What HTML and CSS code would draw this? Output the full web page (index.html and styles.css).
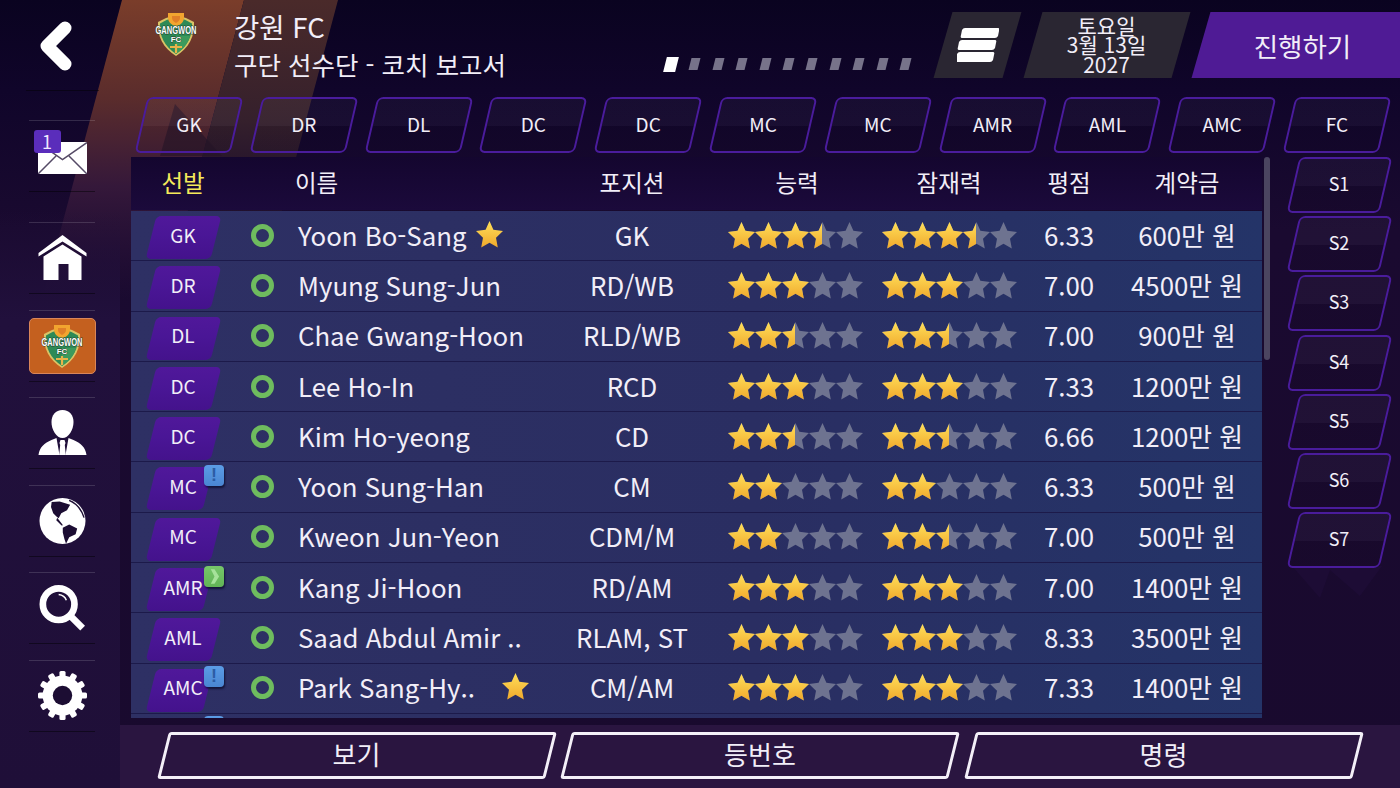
FILE: index.html
```html
<!DOCTYPE html>
<html lang="ko">
<head>
<meta charset="utf-8">
<title>구단 선수단 - 코치 보고서</title>
<link rel="stylesheet" href="styles.css">
</head>
<body>
<svg class="defs" width="0" height="0" aria-hidden="true">
  <defs>
    <linearGradient id="gold" x1="0" y1="0" x2="0" y2="1"><stop offset="0" stop-color="#ffdf5a"/><stop offset="1" stop-color="#f0a92c"/></linearGradient>
    <linearGradient id="bandA" x1="0" y1="0" x2="0" y2="1"><stop offset="0" stop-color="#7a3d2a"/><stop offset=".33" stop-color="#5a2c2c"/><stop offset=".62" stop-color="#35183a"/><stop offset="1" stop-color="#2a1238" stop-opacity="0"/></linearGradient>
    <linearGradient id="bandB" x1="0" y1="0" x2="0" y2="1"><stop offset="0" stop-color="#4a2a2a"/><stop offset=".4" stop-color="#35202c"/><stop offset="1" stop-color="#1c0c2c" stop-opacity="0"/></linearGradient>
    <symbol id="five" viewBox="0 0 135 27">
      <path id="st" d="M13.500 0l3.900 8.700 9.600 1.300-7 6.800 1.800 9.700-8.300-4.700-8.300 4.700 1.800-9.700-7-6.800 9.600-1.300z"/>
      <use href="#st" x="27"/><use href="#st" x="54"/><use href="#st" x="81"/><use href="#st" x="108"/>
    </symbol>
    <symbol id="crest" viewBox="0 0 42 44">
      <path d="M11 6l10-3 10 3 8 4c1 14-5 26-18 34C8 36 2 24 3 10z" fill="#d9c466"/>
      <path d="M11.500 8L21 5l9.500 3 6.500 3.500c.8 12-4.500 23-16 30.500C9.500 34.500 4.200 23.500 5 11.500z" fill="#2d8a56"/>
      <path d="M21 24h14c-2 7-6 13-14 18z" fill="#3c9a5c"/>
      <path d="M13 1h16v4c0 5-3 8-8 9-5-1-8-4-8-9z" fill="#f2a52f"/>
      <path d="M17 4h8v2c0 2-2 4-4 5-2-1-4-3-4-5z" fill="#e07f28"/>
      <text x="21" y="21.500" textLength="41" lengthAdjust="spacingAndGlyphs" class="crest-name">GANGWON</text>
      <text x="21" y="30" class="crest-fc">FC</text>
      <path d="M15 35h12M21 32v9" stroke="#e8b34a" stroke-width="2.200" fill="none"/>
    </symbol>
  </defs>
</svg>

<div class="app">
  <svg class="decor" viewBox="0 0 1400 788" aria-hidden="true">
    <path d="M122 0H244L164 300H42z" fill="url(#bandA)"/>
    <path d="M244 0H338L258 300H164z" fill="url(#bandB)"/>
    <path d="M175 104L222 156H160z" fill="#241428" opacity=".6"/>
    <path d="M1292 566H1382L1360 596 1330 570 1320 598z" fill="#1f0e3a" opacity=".6"/>
  </svg>

  <aside class="sidebar">
    <div class="nav-back">
      <svg class="back-icon" viewBox="0 0 40 52"><path d="M29 8L11 26l18 18" fill="none" stroke="#fff" stroke-width="13" stroke-linecap="round" stroke-linejoin="round"/></svg>
    </div>
    <nav class="nav-list">
      <div class="nav-item nav-first">
        <div class="mail">
          <svg class="mail-icon" viewBox="0 0 49 32"><path d="M0 0h49v32H0z" fill="#fff"/><path d="M0 .5l24.500 17L49 .5M0 32l18-18M49 32L31 14" fill="none" stroke="#554a66" stroke-width="1.500"/></svg>
          <span class="mail-count">1</span>
        </div>
      </div>
      <div class="nav-item">
        <svg class="icon" viewBox="0 0 48 46"><path d="M24 0L48 18v3.500L24 6.500 0 21.500V18z" fill="#fff"/><path d="M24 9.500L43 21.500V45H30V29H20V45H5V21.500z" fill="#fff"/></svg>
      </div>
      <div class="nav-item">
        <div class="club-tile"><svg class="club-crest"><use href="#crest"/></svg></div>
      </div>
      <div class="nav-item">
        <svg class="icon" viewBox="0 0 48 46"><path d="M24 0c7 0 11 5 11 12 0 8-5 16-11 16S13 20 13 12C13 5 17 0 24 0z" fill="#fff"/><path d="M0 45C1 37 6 33 13 30l5-2 3 17zM48 45c-1-8-6-12-13-15l-5-2-3 17z" fill="#fff"/><path d="M22 30h4l1 3-.7 2 1 10h-6.600l1-10-.7-2z" fill="#fff"/></svg>
      </div>
      <div class="nav-item">
        <svg class="icon" viewBox="0 0 48 48"><circle cx="24" cy="24" r="24" fill="#fff"/><path d="M12.700 4.300L21 3.700 32 7l-3.300 5.700-6 3.300-2.700 5-2.300-1.700-3.400-3.300L12 9.300zM18.500 20.500l6 8-1.500.2-5.500-5.500z" fill="#1c0d33"/><path d="M24.300 31l6.700-3.300 8.300 4-1.600 6-6.700 3.300-3.300 6.700-1.700-5-1.700-6.700z" fill="#1c0d33"/><path d="M31 2.500c7 3 13 10 15.500 18" fill="none" stroke="#1c0d33" stroke-width="1.500"/></svg>
      </div>
      <div class="nav-item">
        <svg class="icon" viewBox="0 0 48 48"><circle cx="20" cy="20" r="16.500" fill="none" stroke="#fff" stroke-width="7"/><path d="M32 32l13 13" stroke="#fff" stroke-width="7"/><path d="M20 10c4 .5 7 3 8 6" fill="none" stroke="#fff" stroke-width="1.500"/></svg>
      </div>
      <div class="nav-item">
        <svg class="icon gear" viewBox="0 0 48 48"><g fill="#fff"><circle cx="24" cy="24" r="19.500"/><rect x="21" y="0" width="6" height="48" rx="1.500"/><rect x="21" y="0" width="6" height="48" rx="1.500" transform="rotate(30 24 24)"/><rect x="21" y="0" width="6" height="48" rx="1.500" transform="rotate(60 24 24)"/><rect x="21" y="0" width="6" height="48" rx="1.500" transform="rotate(90 24 24)"/><rect x="21" y="0" width="6" height="48" rx="1.500" transform="rotate(120 24 24)"/><rect x="21" y="0" width="6" height="48" rx="1.500" transform="rotate(150 24 24)"/></g><circle cx="24" cy="24" r="9.500" fill="#1c0d33"/></svg>
      </div>
    </nav>
  </aside>

  <main class="main">
    <header class="topbar">
      <svg class="top-crest"><use href="#crest"/></svg>
      <div class="titles">
        <div class="title-club">강원 FC</div>
        <div class="title-page">구단 선수단 - 코치 보고서</div>
      </div>
      <div class="pager">
        <span class="dot dot-on"></span><span class="dot"></span><span class="dot"></span><span class="dot"></span><span class="dot"></span><span class="dot"></span><span class="dot"></span><span class="dot"></span><span class="dot"></span><span class="dot"></span><span class="dot"></span>
      </div>
      <div class="slant menu-btn">
        <svg class="menu-icon" viewBox="0 0 42 34"><path d="M8 0h33q2 0 1 3l-1 5q-1 2-3 2H5q-2 0-1-3l1-5q1-2 3-2zM5 12h33q2 0 1 3l-1 5q-1 2-3 2H2q-2 0-1-3l1-5q1-2 3-2zM3 24h33q2 0 1 3l-1 5q-1 2-3 2H0q-2 0-1-3l1-5q1-2 3-2z" fill="#fff"/></svg>
      </div>
      <div class="slant date-btn"><span>토요일</span><span>3월 13일</span><span>2027</span></div>
      <div class="slant go-btn">진행하기</div>
    </header>

    <div class="pos-tabs">
      <div class="tab">GK</div><div class="tab">DR</div><div class="tab">DL</div><div class="tab">DC</div><div class="tab">DC</div><div class="tab">MC</div><div class="tab">MC</div><div class="tab">AMR</div><div class="tab">AML</div><div class="tab">AMC</div><div class="tab">FC</div>
    </div>

    <div class="content">
      <section class="table">
        <div class="row head">
          <div class="c-pos starter">선발</div>
          <div></div>
          <div class="c-name head-name">이름</div>
          <div class="c-mid">포지션</div>
          <div class="c-mid">능력</div>
          <div class="c-mid">잠재력</div>
          <div class="c-mid">평점</div>
          <div class="c-mid">계약금</div>
        </div>
        <div class="rows">
          <div class="row">
            <div class="c-pos"><span class="badge">GK</span></div><div class="ring"></div>
            <div class="c-name">Yoon Bo-Sang<svg class="fav" viewBox="0 0 27 27"><use href="#st" fill="url(#gold)"/></svg></div>
            <div class="c-mid">GK</div>
            <div class="stars stars-a"><svg class="five grey"><use href="#five"/></svg><div class="stars-fill" style="width:70%"><svg class="five"><use href="#five" fill="url(#gold)"/></svg></div></div>
            <div class="stars"><svg class="five grey"><use href="#five"/></svg><div class="stars-fill" style="width:70%"><svg class="five"><use href="#five" fill="url(#gold)"/></svg></div></div>
            <div class="c-mid">6.33</div><div class="c-mid">600만 원</div>
          </div>
          <div class="row">
            <div class="c-pos"><span class="badge">DR</span></div><div class="ring"></div>
            <div class="c-name">Myung Sung-Jun</div>
            <div class="c-mid">RD/WB</div>
            <div class="stars stars-a"><svg class="five grey"><use href="#five"/></svg><div class="stars-fill" style="width:60%"><svg class="five"><use href="#five" fill="url(#gold)"/></svg></div></div>
            <div class="stars"><svg class="five grey"><use href="#five"/></svg><div class="stars-fill" style="width:60%"><svg class="five"><use href="#five" fill="url(#gold)"/></svg></div></div>
            <div class="c-mid">7.00</div><div class="c-mid">4500만 원</div>
          </div>
          <div class="row">
            <div class="c-pos"><span class="badge">DL</span></div><div class="ring"></div>
            <div class="c-name">Chae Gwang-Hoon</div>
            <div class="c-mid">RLD/WB</div>
            <div class="stars stars-a"><svg class="five grey"><use href="#five"/></svg><div class="stars-fill" style="width:50%"><svg class="five"><use href="#five" fill="url(#gold)"/></svg></div></div>
            <div class="stars"><svg class="five grey"><use href="#five"/></svg><div class="stars-fill" style="width:50%"><svg class="five"><use href="#five" fill="url(#gold)"/></svg></div></div>
            <div class="c-mid">7.00</div><div class="c-mid">900만 원</div>
          </div>
          <div class="row">
            <div class="c-pos"><span class="badge">DC</span></div><div class="ring"></div>
            <div class="c-name">Lee Ho-In</div>
            <div class="c-mid">RCD</div>
            <div class="stars stars-a"><svg class="five grey"><use href="#five"/></svg><div class="stars-fill" style="width:60%"><svg class="five"><use href="#five" fill="url(#gold)"/></svg></div></div>
            <div class="stars"><svg class="five grey"><use href="#five"/></svg><div class="stars-fill" style="width:60%"><svg class="five"><use href="#five" fill="url(#gold)"/></svg></div></div>
            <div class="c-mid">7.33</div><div class="c-mid">1200만 원</div>
          </div>
          <div class="row">
            <div class="c-pos"><span class="badge">DC</span></div><div class="ring"></div>
            <div class="c-name">Kim Ho-yeong</div>
            <div class="c-mid">CD</div>
            <div class="stars stars-a"><svg class="five grey"><use href="#five"/></svg><div class="stars-fill" style="width:50%"><svg class="five"><use href="#five" fill="url(#gold)"/></svg></div></div>
            <div class="stars"><svg class="five grey"><use href="#five"/></svg><div class="stars-fill" style="width:50%"><svg class="five"><use href="#five" fill="url(#gold)"/></svg></div></div>
            <div class="c-mid">6.66</div><div class="c-mid">1200만 원</div>
          </div>
          <div class="row">
            <div class="c-pos"><span class="badge badge-short">MC</span><span class="flag flag-info">!</span></div><div class="ring"></div>
            <div class="c-name">Yoon Sung-Han</div>
            <div class="c-mid">CM</div>
            <div class="stars stars-a"><svg class="five grey"><use href="#five"/></svg><div class="stars-fill" style="width:40%"><svg class="five"><use href="#five" fill="url(#gold)"/></svg></div></div>
            <div class="stars"><svg class="five grey"><use href="#five"/></svg><div class="stars-fill" style="width:40%"><svg class="five"><use href="#five" fill="url(#gold)"/></svg></div></div>
            <div class="c-mid">6.33</div><div class="c-mid">500만 원</div>
          </div>
          <div class="row">
            <div class="c-pos"><span class="badge">MC</span></div><div class="ring"></div>
            <div class="c-name">Kweon Jun-Yeon</div>
            <div class="c-mid">CDM/M</div>
            <div class="stars stars-a"><svg class="five grey"><use href="#five"/></svg><div class="stars-fill" style="width:40%"><svg class="five"><use href="#five" fill="url(#gold)"/></svg></div></div>
            <div class="stars"><svg class="five grey"><use href="#five"/></svg><div class="stars-fill" style="width:50%"><svg class="five"><use href="#five" fill="url(#gold)"/></svg></div></div>
            <div class="c-mid">7.00</div><div class="c-mid">500만 원</div>
          </div>
          <div class="row">
            <div class="c-pos"><span class="badge badge-short">AMR</span><span class="flag flag-go"><svg class="flag-arrow" viewBox="0 0 12 16"><path d="M2 0h4l5 8-5 8H2l4-8z"/></svg></span></div><div class="ring"></div>
            <div class="c-name">Kang Ji-Hoon</div>
            <div class="c-mid">RD/AM</div>
            <div class="stars stars-a"><svg class="five grey"><use href="#five"/></svg><div class="stars-fill" style="width:60%"><svg class="five"><use href="#five" fill="url(#gold)"/></svg></div></div>
            <div class="stars"><svg class="five grey"><use href="#five"/></svg><div class="stars-fill" style="width:60%"><svg class="five"><use href="#five" fill="url(#gold)"/></svg></div></div>
            <div class="c-mid">7.00</div><div class="c-mid">1400만 원</div>
          </div>
          <div class="row">
            <div class="c-pos"><span class="badge">AML</span></div><div class="ring"></div>
            <div class="c-name">Saad Abdul Amir ..</div>
            <div class="c-mid">RLAM, ST</div>
            <div class="stars stars-a"><svg class="five grey"><use href="#five"/></svg><div class="stars-fill" style="width:60%"><svg class="five"><use href="#five" fill="url(#gold)"/></svg></div></div>
            <div class="stars"><svg class="five grey"><use href="#five"/></svg><div class="stars-fill" style="width:60%"><svg class="five"><use href="#five" fill="url(#gold)"/></svg></div></div>
            <div class="c-mid">8.33</div><div class="c-mid">3500만 원</div>
          </div>
          <div class="row">
            <div class="c-pos"><span class="badge badge-short">AMC</span><span class="flag flag-info">!</span></div><div class="ring"></div>
            <div class="c-name">Park Sang-Hy..<svg class="fav fav-end" viewBox="0 0 27 27"><use href="#st" fill="url(#gold)"/></svg></div>
            <div class="c-mid">CM/AM</div>
            <div class="stars stars-a"><svg class="five grey"><use href="#five"/></svg><div class="stars-fill" style="width:60%"><svg class="five"><use href="#five" fill="url(#gold)"/></svg></div></div>
            <div class="stars"><svg class="five grey"><use href="#five"/></svg><div class="stars-fill" style="width:60%"><svg class="five"><use href="#five" fill="url(#gold)"/></svg></div></div>
            <div class="c-mid">7.33</div><div class="c-mid">1400만 원</div>
          </div>
          <div class="row">
            <div class="c-pos"><span class="flag flag-info"></span></div>
          </div>
        </div>
      </section>
      <div class="scrollbar"><div class="scroll-thumb"></div></div>
      <div class="slots">
        <div class="tab slot">S1</div><div class="tab slot">S2</div><div class="tab slot">S3</div><div class="tab slot">S4</div><div class="tab slot">S5</div><div class="tab slot">S6</div><div class="tab slot">S7</div>
      </div>
    </div>

    <footer class="bottombar">
      <div class="action">보기</div><div class="action">등번호</div><div class="action">명령</div>
    </footer>
  </main>
</div>
</body>
</html>
```

FILE: styles.css
```css
* { box-sizing: border-box; }
html, body { margin: 0; height: 100%; }
body {
  width: 1400px;
  height: 788px;
  overflow: hidden;
  background: #0c0420;
  color: #f2eef8;
  font-family: "Noto Sans CJK KR", "Noto Sans", sans-serif;
}
.defs { position: absolute; }
.grey { fill: #6e7390; }

.app {
  position: relative;
  display: flex;
  width: 1400px;
  height: 788px;
  overflow: hidden;
  background: linear-gradient(180deg, #0a0320 0, #10052a 90px, #1a0a30 230px, #190a2e 100%);
}
.decor { position: absolute; left: 0; top: 0; width: 1400px; height: 788px; }

/* sidebar */
.sidebar {
  position: relative;
  width: 120px;
  flex: none;
  display: flex;
  flex-direction: column;
  align-items: center;
  background: linear-gradient(180deg, rgba(30,14,56,0) 0, rgba(30,14,56,0) 210px, #21103c 320px, #1f0f38 100%);
}
.nav-back {
  width: 73px;
  height: 120px;
  padding-bottom: 30px;
  margin-left: 4px;
  display: flex;
  align-items: center;
  justify-content: center;
  background: linear-gradient(180deg, transparent 90px, rgba(0,0,0,.45) 90px, rgba(0,0,0,.45) 91px, transparent 91px);
}
.back-icon { width: 40px; height: 52px; margin-left: -12px; margin-top: 2px; }
.nav-list { display: flex; flex-direction: column; gap: 15.500px; margin-left: 4px; }
.nav-item {
  width: 66px;
  height: 72px;
  border-top: 1px solid rgba(255,255,255,.14);
  border-bottom: 1px solid rgba(0,0,0,.45);
  display: flex;
  align-items: center;
  justify-content: center;
}
.nav-first { margin-bottom: 14.500px; }
.icon { width: 49px; height: 46px; display: block; }
.gear { height: 49px; }
.mail { position: relative; width: 49px; height: 32px; margin-top: 3px; }
.mail-icon { display: block; width: 49px; height: 32px; }
.mail-count {
  position: absolute;
  left: -4px;
  top: -12px;
  width: 27px;
  height: 23px;
  border-radius: 3px;
  background: #5a2dbb;
  font-size: 18px;
  line-height: 22px;
  text-align: center;
  color: #efe8ff;
}
.club-tile {
  width: 67px;
  height: 56px;
  flex: none;
  border-radius: 5px;
  background: #c4601f;
  border: 1px solid #d9865a;
  display: flex;
  align-items: center;
  justify-content: center;
}
.club-crest { width: 42px; height: 44px; }
.crest-name { font: 700 10px "Liberation Sans", sans-serif; fill: #fff; text-anchor: middle; paint-order: stroke; stroke: #24402f; stroke-width: 1px; }
.crest-fc { font: 700 8px "Liberation Sans", sans-serif; fill: #fff; text-anchor: middle; paint-order: stroke; stroke: #24402f; stroke-width: .8px; }

/* main */
.main {
  position: relative;
  flex: 1;
  min-width: 0;
  display: flex;
  flex-direction: column;
}
.topbar {
  display: flex;
  align-items: center;
  height: 66px;
  margin-top: 12px;
  padding-left: 35px;
}
.top-crest { width: 42px; height: 44px; flex: none; margin-top: -22px; }
.titles { flex: 1; margin-left: 37px; }
.title-club { font-size: 27.500px; line-height: 36px; height: 37px; }
.title-page { font-size: 25.500px; line-height: 37px; }
.pager { display: flex; align-items: center; gap: 14.400px; margin-right: 33px; margin-top: 38px; }
.dot { width: 9px; height: 12px; background: #77738a; transform: skewX(-14deg); }
.dot-on { width: 12px; height: 15px; background: #fff; margin-right: -1px; }
.slant { position: relative; height: 66px; flex: none; display: flex; align-items: center; justify-content: center; }
.slant::before { content: ""; position: absolute; inset: 0; transform: skewX(-16deg); background: #2a2632; }
.slant > * { position: relative; }
.menu-btn { width: 69px; }
.menu-icon { width: 42px; height: 34px; }
.date-btn { width: 148px; margin-left: 20.500px; flex-direction: column; font-size: 21px; line-height: 19.500px; }
.go-btn { width: 199px; margin-left: 20.500px; font-size: 26.500px; padding-left: 4px; z-index: 0; }
.go-btn::before { right: -30px; background: #4f1b95; z-index: -1; }

.pos-tabs { display: flex; gap: 18.800px; margin-top: 19px; padding-left: 21px; }
.tab {
  position: relative;
  width: 96px;
  height: 56px;
  padding-bottom: 4px;
  flex: none;
  display: flex;
  align-items: center;
  justify-content: center;
  font-size: 19px;
  z-index: 0;
}
.tab::before {
  content: "";
  position: absolute;
  inset: 0;
  z-index: -1;
  transform: skewX(-13deg);
  border: 2px solid #4a1c9c;
  border-radius: 6px;
  background: linear-gradient(180deg, rgba(255,255,255,.03) 0, rgba(255,255,255,.03) 52%, rgba(0,0,0,.06) 52%, rgba(0,0,0,.06) 100%);
}

.content { display: flex; margin-top: 4px; padding-left: 11px; height: 561px; flex: none; }
.table { width: 1131px; flex: none; height: 561px; display: flex; flex-direction: column; overflow: hidden; }
.row {
  position: relative;
  display: grid;
  grid-template-columns: 104px 54px 263px 160px 170px 134px 106px 130px;
  align-items: center;
  height: 50.300px;
  padding-bottom: 3px;
  border-bottom: 1px solid #1c1a4a;
  flex: none;
}
.head { height: 53px; background: linear-gradient(180deg, #14062f, #1b0a3b); border-bottom: 0; font-size: 23.500px; margin-bottom: 1px; }
.rows { flex: 1; overflow: hidden; background: linear-gradient(90deg, #2e3064 0, #2a2e62 55%, #243468 100%); font-size: 25.800px; }
.c-pos { position: relative; display: flex; justify-content: center; align-items: center; font-size: 19px; height: 100%; }
.head .c-pos { font-size: 23.500px; }
.starter { color: #f5ea5a; }
.c-name { padding-left: 9px; display: flex; align-items: center; white-space: nowrap; }
.head-name { padding-left: 6px; }
.c-mid { text-align: center; white-space: nowrap; }
.badge {
  position: relative;
  width: 65px;
  height: 43px;
  display: flex;
  align-items: center;
  justify-content: center;
  z-index: 0;
}
.badge::before {
  content: "";
  position: absolute;
  inset: 3.350px 0 -3.350px;
  z-index: -1;
  transform: skewX(-14deg);
  border-radius: 5px;
  background: linear-gradient(180deg, #50189a 0, #4a1696 45%, #44128c 100%);
}
.badge-short::before { right: 8px; }
.flag {
  position: absolute;
  left: 73px;
  top: 2.500px;
  width: 20px;
  height: 21px;
  border-radius: 4px;
  background: linear-gradient(180deg, #5b9ce6, #4a86d2);
  box-shadow: 1px 2px 2px rgba(8,8,40,.7);
  color: #2c5ca4;
  font: 700 18px/20px "Liberation Sans", sans-serif;
  text-align: center;
}
.flag-go { background: linear-gradient(180deg, #76c66a, #62b456); display: flex; align-items: center; justify-content: center; }
.flag-arrow { width: 11px; height: 15px; fill: #a6e29a; }
.ring { width: 23px; height: 23px; border: 5px solid #6ebc5e; border-radius: 50%; justify-self: center; margin-top: 2px; }
.fav { width: 27px; height: 27px; margin-left: 10px; flex: none; }
.fav-end { margin-left: 27px; }
.stars { position: relative; width: 135px; height: 27px; justify-self: center; margin-top: 2px; }
.stars-a { margin-right: 4px; }
.five { display: block; width: 135px; height: 27px; }
.stars-fill { position: absolute; left: 0; top: 0; height: 27px; overflow: hidden; }

.scrollbar { width: 6px; margin-left: 2px; flex: none; }
.scroll-thumb { width: 6px; height: 203px; background: #4b4560; border-radius: 3px; }
.slots { display: flex; flex-direction: column; gap: 3.200px; margin-left: 22.500px; }
.slot { width: 93px; font-size: 18px; }

.bottombar {
  display: flex;
  gap: 15.500px;
  height: 63px;
  margin-top: 7px;
  padding: 7px 0 0 42.500px;
  background: #2a1540;
}
.action {
  position: relative;
  width: 388px;
  height: 47px;
  padding-bottom: 4px;
  display: flex;
  align-items: center;
  justify-content: center;
  font-size: 26px;
  z-index: 0;
}
.action::before {
  content: "";
  position: absolute;
  inset: 0;
  z-index: -1;
  transform: skewX(-14deg);
  border: 3px solid #f4f0f8;
  border-radius: 3px;
}
```
